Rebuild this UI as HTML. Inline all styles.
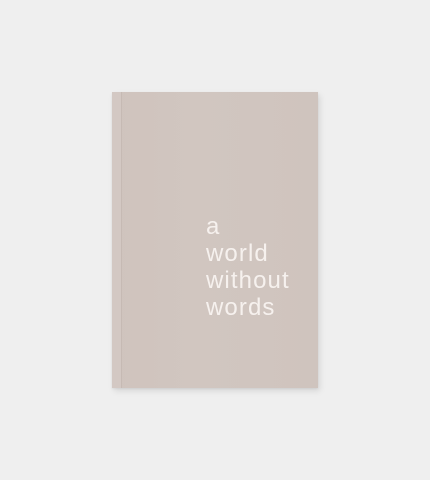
<!DOCTYPE html>
<html><head><meta charset="utf-8"><style>
html,body{margin:0;padding:0}
body{width:430px;height:480px;background:#efefef;position:relative;overflow:hidden;font-family:"Liberation Sans","DejaVu Sans",sans-serif}
.book{position:absolute;left:112px;top:92px;width:206px;height:296px;background:linear-gradient(90deg,#cfc3bd 0%,#d1c6c0 40%,#cfc4be 100%);box-shadow:2px 3px 6px rgba(0,0,0,0.10),0 1px 2px rgba(0,0,0,0.06)}
.spine{position:absolute;left:9px;top:0;width:1px;height:100%;background:#c6bab4}
.spine2{position:absolute;left:0;top:0;width:9px;height:100%;background:#d3c8c3}
.t{position:absolute;left:94px;top:121px;color:#f6f1ee;font-size:24px;line-height:27px;letter-spacing:1.1px}
</style></head><body>
<div class="book"><div class="spine2"></div><div class="spine"></div>
<div class="t">a<br>world<br>without<br>words</div></div>
</body></html>
